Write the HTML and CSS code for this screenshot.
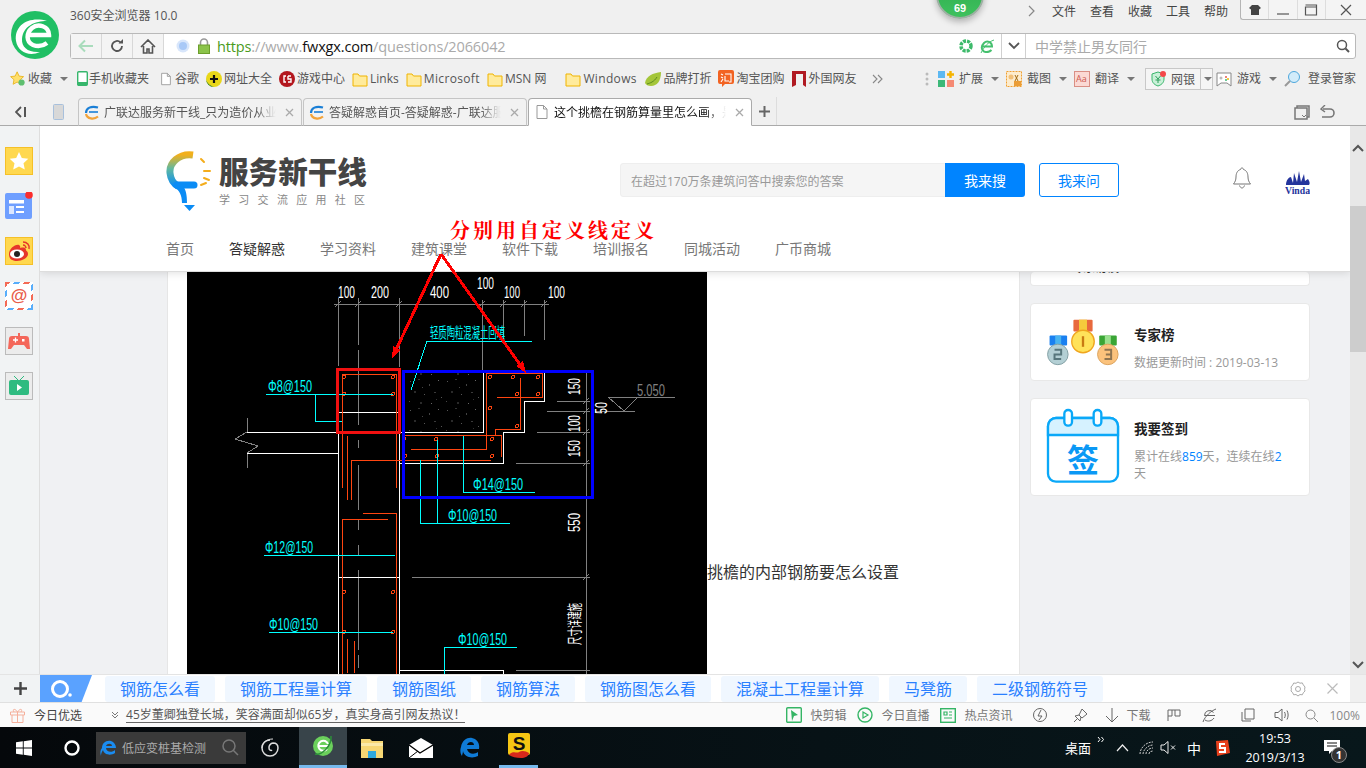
FILE: index.html
```html
<!DOCTYPE html>
<html lang="zh-CN">
<head>
<meta charset="utf-8">
<title>这个挑檐在钢筋算量里怎么画</title>
<link rel="stylesheet" href="styles.css">
</head>
<body>
<svg class="defs" width="0" height="0">
  <symbol id="folder" viewBox="0 0 16 16"><path d="M1 3h5l1.500 2H15v10H1z" fill="#ffeb9c" stroke="#f0b400" stroke-width="1"/></symbol>
  <symbol id="tabe" viewBox="0 0 16 16"><path d="M2 9C2 4 7 1.500 14 3.500" fill="none" stroke="#1a7fd6" stroke-width="2.200"/><path d="M5 8h9" stroke="#1a7fd6" stroke-width="1.600"/><path d="M2 10c1 5 8 6 12 2.500" fill="none" stroke="#f2a33a" stroke-width="2.200"/></symbol>
  <symbol id="doc" viewBox="0 0 16 16"><path d="M3 1.500h6.500l3.500 3.500v9.500H3z M9.500 1.500V5H13" fill="#fff" stroke="#999" stroke-width="1"/></symbol>
</svg>

<header class="chrome">
  <div class="top">
    <div class="brand">
      <svg width="48" height="48" viewBox="0 0 48 48"><circle cx="24" cy="24" r="24" fill="#20bf64"/><path d="M5 30C3 14 18 5 36 10 24 10 12 15 11 28c-.5 8 6 14 18 13-11 5-22 0-24-11z" fill="#fff"/><path d="M17 24H38C38 15 27 12 21 17c-6 5-6 14 1 17 5 2 10 1 14-2" fill="none" stroke="#fff" stroke-width="4.500"/></svg>
    </div>
    <div class="top-main">
      <div class="title-row">
        <span class="app-title">360安全浏览器 10.0</span>
        <nav class="menu">
          <svg class="menu-more" width="8" height="12" viewBox="0 0 8 12"><path d="M1 1l5 5-5 5" fill="none" stroke="#888" stroke-width="1.200"/></svg>
          <span>文件</span><span>查看</span><span>收藏</span><span>工具</span><span>帮助</span>
        </nav>
        <div class="winctl">
          <span class="wbtn"><svg width="14" height="12" viewBox="0 0 14 12"><path d="M4 1h6l3 3-2 1.500V11H3V5.500L1 4z" fill="#444"/></svg></span>
          <span class="wbtn"><svg width="14" height="12" viewBox="0 0 14 12"><path d="M1 10h12" stroke="#555" stroke-width="1.200"/></svg></span>
          <span class="wbtn"><svg width="14" height="12" viewBox="0 0 14 12"><path d="M1.500 3h11v8h-11zM1.500 1h11v2" fill="none" stroke="#555" stroke-width="1.200"/></svg></span>
          <span class="wbtn wide"><svg width="12" height="12" viewBox="0 0 12 12"><path d="M1 1l10 10M11 1L1 11" stroke="#555" stroke-width="1.200"/></svg></span>
        </div>
      </div>
      <div class="address">
        <span class="nav-btn"><svg width="16" height="14" viewBox="0 0 16 14"><path d="M15 7H2M7 1.500L1.500 7 7 12.500" fill="none" stroke="#a9dcbc" stroke-width="2"/></svg></span>
        <span class="nav-btn"><svg width="14" height="14" viewBox="0 0 14 14"><path d="M12 7a5 5 0 1 1-1.500-3.600" fill="none" stroke="#555" stroke-width="1.800"/><path d="M8.500 4.500H13V0z" fill="#555"/></svg></span>
        <span class="nav-btn"><svg width="16" height="15" viewBox="0 0 16 15"><path d="M1 8l7-7 7 7M3.500 7v7h3.500v-4h2v4h3.500V7" fill="none" stroke="#555" stroke-width="1.600"/></svg></span>
        <svg class="globe" width="14" height="14" viewBox="0 0 14 14"><circle cx="7" cy="7" r="6.500" fill="#d8e6fb"/><circle cx="7" cy="7" r="4" fill="#a9c9f7"/></svg>
        <svg class="lock" width="14" height="16" viewBox="0 0 14 16"><path d="M3.500 7V4.500a3.500 3.500 0 0 1 7 0V7" fill="none" stroke="#999" stroke-width="1.600"/><rect x="1.500" y="7" width="11" height="8.500" fill="#8bc34a" stroke="#6c9e2c"/></svg>
        <div class="url"><span class="u-g">https</span>://www.<span class="u-b">fwxgx.com</span>/questions/2066042</div>
        <span class="addr-icons">
          <svg width="14" height="14" viewBox="0 0 14 14"><circle cx="7" cy="7" r="5" fill="none" stroke="#3cba6a" stroke-width="3.500" stroke-dasharray="3 1"/></svg>
          <svg width="14" height="14" viewBox="0 0 14 14"><path d="M2 7.500h10C12 3 7 1 4 4 1 7 1 11 4 12.500c2.500 1 5.500.5 7.500-1.500" fill="none" stroke="#45c06e" stroke-width="2"/><path d="M1 14C4 8 8 3 14 1" fill="none" stroke="#45c06e"/></svg>
        </span>
        <span class="drop"><svg width="12" height="8" viewBox="0 0 12 8"><path d="M1 1l5 5 5-5" fill="none" stroke="#555" stroke-width="1.800"/></svg></span>
        <div class="search-box"><span>中学禁止男女同行</span><svg width="14" height="14" viewBox="0 0 14 14"><circle cx="6" cy="6" r="4.500" fill="none" stroke="#555" stroke-width="1.500"/><path d="M9.500 9.500L13 13" stroke="#555" stroke-width="2"/></svg></div>
      </div>
    </div>
  </div>

  <div class="bookmarks">
    <div class="bm-left">
      <span class="bm"><svg width="16" height="17" viewBox="0 0 18 17"><path d="M8 1l2.200 4.800 5.100.6-3.800 3.500 1 5.100L8 12.500 3.500 15l1-5.100L.7 6.400l5.100-.6z" fill="#ffdf6b" stroke="#e8b520"/><circle cx="13" cy="13" r="3.500" fill="#5fbf70"/></svg>收藏<i class="caret"></i></span>
      <span class="bm bm-phone"><svg width="11" height="15" viewBox="0 0 11 15"><rect x=".7" y=".7" width="9.600" height="13.600" rx="1" fill="#fff" stroke="#37b66c" stroke-width="1.400"/><rect x="1" y="11" width="9" height="3" fill="#37b66c"/></svg>手机收藏夹</span>
      <span class="bm bm-doc"><svg width="14" height="16"><use href="#doc"/></svg>谷歌</span>
      <span class="bm"><svg width="16" height="16" viewBox="0 0 16 16"><circle cx="8" cy="8" r="8" fill="#e9d719"/><path d="M0 8a8 8 0 0 0 8 8c-5-2-7-4-8-8z" fill="#1b7b35"/><path d="M8 4v8M4 8h8" stroke="#111" stroke-width="2.200"/></svg>网址大全</span>
      <span class="bm"><svg width="16" height="16" viewBox="0 0 16 16"><circle cx="8" cy="8" r="8" fill="#b3161d"/><path d="M7 5H5v6h2M9 5h3M9 5v3h3v3H9" fill="none" stroke="#fff" stroke-width="1.400"/></svg>游戏中心</span>
      <span class="bm"><svg width="16" height="16"><use href="#folder"/></svg>Links</span>
      <span class="bm lat"><svg width="16" height="16"><use href="#folder"/></svg>Microsoft</span>
      <span class="bm bm-wide"><svg width="16" height="16"><use href="#folder"/></svg>MSN 网</span>
      <span class="bm lat bm-win"><svg width="16" height="16"><use href="#folder"/></svg>Windows</span>
      <span class="bm"><svg width="16" height="16" viewBox="0 0 16 16"><path d="M0 12C1 5 8 2 16 1c0 9-4 14-10 14-3 0-5-1-6-3z" fill="#a4c639"/><path d="M2 13c3-1 7-2 10-7" stroke="#5d8a1e" fill="none"/></svg>品牌打折</span>
      <span class="bm bm-tb"><svg width="16" height="17" viewBox="0 0 16 17"><path d="M2 0h12a2 2 0 0 1 2 2v10a2 2 0 0 1-2 2H7l-3 3v-3H2a2 2 0 0 1-2-2V2a2 2 0 0 1 2-2z" fill="#f26322"/><path d="M3 4l2 1M3 7l2 1M3 12l2-3M7 4h6v8h-2M7 6v5h4" fill="none" stroke="#fff" stroke-width="1.100"/></svg>淘宝团购</span>
      <span class="bm"><svg width="14" height="16" viewBox="0 0 14 16"><path d="M0 0h14v16l-3-2V3H4v11l-4 2z" fill="#b01a22"/></svg>外国网友</span>
      <svg class="more" width="12" height="10" viewBox="0 0 12 10"><path d="M1 1l4 4-4 4M6 1l4 4-4 4" fill="none" stroke="#888" stroke-width="1.100"/></svg>
    </div>
    <div class="bm-right">
      <svg class="grip" width="4" height="14" viewBox="0 0 4 14"><circle cx="2" cy="2" r="1.500" fill="#bbb"/><circle cx="2" cy="7" r="1.500" fill="#bbb"/><circle cx="2" cy="12" r="1.500" fill="#bbb"/></svg>
      <span class="bm tool"><svg width="16" height="16" viewBox="0 0 16 16"><rect x="0" y="0" width="7" height="7" fill="#5cb8f2"/><rect x="0" y="9" width="7" height="7" fill="#3cb878"/><rect x="9" y="9" width="7" height="7" fill="#f58a74"/><path d="M12.500 0v7M9 3.500h7" stroke="#f5b400" stroke-width="2.400"/></svg>扩展<i class="caret"></i></span>
      <span class="bm tool"><svg width="16" height="16" viewBox="0 0 16 16"><rect x=".5" y=".5" width="15" height="15" fill="#fdeccd" stroke="#f0a030" stroke-dasharray="2 1"/><circle cx="5" cy="6" r="2.500" fill="#f2c078"/><path d="M9 4l3 6M12 4L9 10" stroke="#a36a10"/><rect x="8" y="10" width="7" height="5" fill="#eb9d36"/></svg>截图<i class="caret"></i></span>
      <span class="bm tool"><svg width="16" height="16" viewBox="0 0 16 16"><rect x=".5" y=".5" width="15" height="15" fill="#fbd9d4" stroke="#d98f85"/></svg><em class="aa">Aa</em>翻译<i class="caret"></i></span>
      <span class="bank"><svg width="16" height="16" viewBox="0 0 16 16"><path d="M8 1l6 2v5c0 4-3 6-6 7-3-1-6-3-6-7V3z" fill="#c9f0d8" stroke="#38b56b"/><path d="M5.500 5L8 8l2.500-3M8 8v4M5.500 9h5" stroke="#2e9e5a" fill="none"/><circle cx="13" cy="3" r="3" fill="#f4484a"/></svg><span class="bank-t">网银</span><span class="bank-c"><i class="caret"></i></span></span>
      <span class="bm tool"><svg width="16" height="16" viewBox="0 0 16 16"><path d="M1 2h14v13l-4-3H5l-4 3z" fill="#fff" stroke="#888"/><circle cx="5" cy="7" r="1.500" fill="#bbb"/><circle cx="10" cy="6" r="1" fill="#e8584f"/><circle cx="12" cy="8" r="1" fill="#f5b400"/><circle cx="10" cy="9" r="1" fill="#3cb878"/></svg>游戏<i class="caret"></i></span>
      <span class="bm tool last"><svg width="16" height="16" viewBox="0 0 16 16"><circle cx="10" cy="6" r="5.500" fill="#d2ecfa" stroke="#4da7dc"/><path d="M6 10l-5 5" stroke="#999" stroke-width="2"/></svg>登录管家</span>
    </div>
  </div>

  <div class="tabs">
    <svg class="side-toggle" width="11" height="12" viewBox="0 0 11 12"><path d="M6 1L1 6l5 5" fill="none" stroke="#555" stroke-width="1.800"/><path d="M10 1v10" stroke="#555" stroke-width="2"/></svg>
    <svg class="phone" width="11" height="16" viewBox="0 0 11 16"><rect x=".5" y=".5" width="10" height="15" rx="1" fill="#d8d8d8" stroke="#a8c0dc"/></svg>
    <div class="tab"><svg width="16" height="16"><use href="#tabe"/></svg><span class="tab-t">广联达服务新干线_只为造价从业人员服务</span><svg class="tab-x" width="9" height="9" viewBox="0 0 9 9"><path d="M1 1l7 7M8 1L1 8" stroke="#aaa" stroke-width="1.300"/></svg></div>
    <div class="tab"><svg width="16" height="16"><use href="#tabe"/></svg><span class="tab-t">答疑解惑首页-答疑解惑-广联达服务新干线</span><svg class="tab-x" width="9" height="9" viewBox="0 0 9 9"><path d="M1 1l7 7M8 1L1 8" stroke="#aaa" stroke-width="1.300"/></svg></div>
    <div class="tab active"><svg width="16" height="16"><use href="#doc"/></svg><span class="tab-t">这个挑檐在钢筋算量里怎么画，是否需要</span><svg class="tab-x" width="9" height="9" viewBox="0 0 9 9"><path d="M1 1l7 7M8 1L1 8" stroke="#aaa" stroke-width="1.300"/></svg></div>
    <span class="tab-add"><svg width="11" height="11" viewBox="0 0 11 11"><path d="M5.500 0v11M0 5.500h11" stroke="#666" stroke-width="2"/></svg></span>
    <span class="tab-tools">
      <svg width="16" height="15" viewBox="0 0 16 15"><path d="M3 3V1h12v11h-2M1 3h12v11H1z" fill="none" stroke="#777" stroke-width="1.500"/><path d="M8 10l2 2 2-2" stroke="#777" fill="none"/></svg>
      <svg width="15" height="15" viewBox="0 0 15 15"><path d="M3 4h7a4 4 0 0 1 0 8H2" fill="none" stroke="#777" stroke-width="1.600"/><path d="M5 0L1 4l4 3" fill="none" stroke="#777" stroke-width="1.400"/></svg>
    </span>
  </div>
</header>

<div class="main">
  <aside class="rail">
    <span class="rail-i r-star"><svg width="22" height="22" viewBox="0 0 22 22"><path d="M11 2l2.800 6 6.500.8-4.800 4.400 1.300 6.400L11 16.400 5.200 19.600l1.300-6.400L1.700 8.800l6.500-.8z" fill="#fff"/></svg></span>
    <span class="rail-i r-news"><svg width="28" height="28" viewBox="0 0 28 28"><rect x="0" y="1" width="27" height="26" rx="2" fill="#6f9fff"/><rect x="4" y="8" width="15" height="3.500" fill="#fff"/><rect x="4" y="14" width="5" height="8" fill="#dbe7ff"/><rect x="11" y="14" width="8" height="2" fill="#fff"/><rect x="11" y="19" width="8" height="2" fill="#fff"/><circle cx="24" cy="3" r="3.800" fill="#fb2d2d"/></svg></span>
    <span class="rail-i r-star"><svg width="26" height="24" viewBox="0 0 26 24"><path d="M3 15c0-5 6-10 10-9 2 1 1 3 1 3s6-2 6 2c0 1 2 1 2 4 0 4-6 7-11 7S3 20 3 15z" fill="#e6362b"/><ellipse cx="11" cy="15" rx="7" ry="4.500" fill="#fff"/><circle cx="11" cy="15" r="3" fill="#222"/><path d="M17 3c4 0 7 3 6 7M17 6c2 0 3 2 3 3" fill="none" stroke="#e6362b" stroke-width="1.500"/></svg></span>
    <span class="rail-i r-mail"><b>@</b></span>
    <span class="rail-i r-gray"><svg width="22" height="18" viewBox="0 0 22 18"><path d="M4 4h14a3 3 0 0 1 3 3l1 10h-3l-3-4H6l-3 4H0l1-10a3 3 0 0 1 3-3z" fill="#f4675a"/><path d="M11 4V1" stroke="#f4675a" stroke-width="2"/><path d="M5 8h5M7.500 5.500v5" stroke="#fff" stroke-width="1.300"/><rect x="14" y="7" width="2.500" height="2.500" fill="#fff"/></svg></span>
    <span class="rail-i r-gray"><svg width="22" height="20" viewBox="0 0 22 20"><rect x="1" y="4" width="20" height="15" rx="2" fill="#2fbb80"/><path d="M6 0l4 4M16 0l-4 4" stroke="#2fbb80"/><path d="M9 8l5 3.500L9 15z" fill="#fff"/></svg></span>
  </aside>

  <div class="page">
    <div class="site-header">
      <div class="site-top">
        <div class="logo">
          <svg width="47" height="62" viewBox="0 0 47 62">
            <defs><linearGradient id="bulb" x1="0" y1="0" x2="0" y2="1"><stop offset="0" stop-color="#f2b01c"/><stop offset=".45" stop-color="#5fb8a0"/><stop offset="1" stop-color="#0b8cf5"/></linearGradient></defs>
            <path d="M27 4C13 2 3 12 4 22c.500 6 4 11 8 13" fill="none" stroke="url(#bulb)" stroke-width="7"/>
            <path d="M11 34h17" stroke="#0b8cf5" stroke-width="7" stroke-linecap="round"/>
            <path d="M9 37c4 2 7 7 7 15h5c0-8-1-13-4-17z" fill="#0b8cf5"/>
            <path d="M18 54h11l-5.500 6z" fill="#0b8cf5"/>
            <path d="M35 8l3 3M38 20h6M38 27l5 2M35 34l5-2" stroke="#f4ad1c" stroke-width="2" stroke-linecap="round"/>
          </svg>
          <div class="logo-t"><strong>服务新干线</strong><small>学习交流应用社区</small></div>
        </div>
        <div class="q-box"><span>在超过170万条建筑问答中搜索您的答案</span><button class="q-btn">我来搜</button></div>
        <button class="ask">我来问</button>
        <svg class="bell" width="18" height="22" viewBox="0 0 18 22"><path d="M9 1c1 0 1.500.8 1.500 1.500C14 3.500 15 7 15 10c0 3 1 5 2.500 7H.5C2 15 3 13 3 10c0-3 1-6.500 4.500-7.500C7.500 1.800 8 1 9 1zM6.500 18.500c.5 1.500 1.500 2.500 2.500 2.500s2-1 2.500-2.500" fill="none" stroke="#777"/></svg>
        <svg class="avatar" width="25" height="26" viewBox="0 0 25 26"><path d="M1 16c0-5 3-8 5-8l2 6 1-10 3 9 2-11 2 11 3-8 1 7 3-2c2 3 2 5 1 6H1z" fill="#24349c"/><text x="0" y="25" class="avatar-t" textLength="25" lengthAdjust="spacingAndGlyphs">Vinda</text></svg>
      </div>
      <nav class="site-nav">
        <a>首页</a><a class="cur">答疑解惑</a><a>学习资料</a><a>建筑课堂</a><a>软件下载</a><a>培训报名</a><a>同城活动</a><a>广币商城</a>
      </nav>
    </div>

    <div class="site-body">
      <article class="article">
        <svg class="cad" width="520" height="402" viewBox="187 272 520 402">
          <defs>
            <pattern id="speck" width="37" height="29" patternUnits="userSpaceOnUse">
              <rect x="3" y="4" width="1" height="1" fill="#555"/><rect x="11" y="2" width="2" height="1" fill="#333"/><rect x="22" y="7" width="1" height="2" fill="#444"/><rect x="31" y="3" width="1" height="1" fill="#666"/>
              <rect x="7" y="14" width="2" height="2" fill="#2a2a2a"/><rect x="17" y="17" width="1" height="1" fill="#555"/><rect x="27" y="15" width="2" height="1" fill="#3a3a3a"/><rect x="34" y="20" width="1" height="1" fill="#555"/>
              <rect x="2" y="24" width="1" height="1" fill="#444"/><rect x="13" y="25" width="2" height="2" fill="#2a2a2a"/><rect x="24" y="26" width="1" height="1" fill="#666"/><rect x="15" y="10" width="1" height="1" fill="#444"/><rect x="29" y="22" width="1" height="1" fill="#333"/>
            </pattern>
          </defs>
          <rect x="187" y="272" width="520" height="402" fill="#000"/>
          <rect x="402" y="373" width="81" height="59" fill="url(#speck)"/>
          <g class="gray">
            <path d="M334 304H549M338 298V366M399 298V367M482 300V370M503 300V340M524 300V336M544 300V340"/>
            <path d="M358 298V345M358 350V425M358 440V448M358 465V510M358 520V530M358 545V555M358 570V650M358 655V668"/>
            <path d="M586 372V674M557 401.500H590M547 411H590M537 432H590M516 463H590M412 577H590M516 670H590"/>
            <path d="M247 418V432M247 453V468M247 432L235 439L258 446L247 453"/>
            <path d="M608 397H675M608 397L624 411L638 397M595 411H635"/>
            <path d="M335 307l6-6M355 307l6-6M396 307l6-6M479 307l6-6M500 307l6-6M521 307l6-6M541 307l6-6M583 404l6-6M583 414l6-6M583 435l6-6M583 466l6-6M583 580l6-6"/>
          </g>
          <g class="white">
            <path d="M338 370H399M338 370V674M399 370V674M338 412H399M247 432H338M247 453H338V480M338 577H399"/>
            <path d="M399 432H483V373M544 373V401H524V432H503V463H400M399 670H503V674"/>
          </g>
          <g class="orange">
            <path d="M342 488V374H396V488M347 436V500M351 500V460.500H491M403 435H501V457M495 435V429H520.500V378M486 374V449H411M486 373.500H542V397.500H497"/>
            <path d="M363 513H396V674M388 519H342V674M347 639V673M354 641V673"/>
          </g>
          <g class="dots">
            <circle cx="344" cy="377" r="1.500"/><circle cx="393" cy="377" r="1.500"/><circle cx="344" cy="394" r="1.500"/><circle cx="393" cy="394" r="1.500"/><circle cx="490" cy="377" r="1.500"/><circle cx="513" cy="377" r="1.500"/><circle cx="538" cy="377" r="1.500"/><circle cx="517" cy="394" r="1.500"/><circle cx="538" cy="394" r="1.500"/><circle cx="490" cy="408" r="1.500"/><circle cx="517" cy="426" r="1.500"/><circle cx="436" cy="439" r="1.500"/><circle cx="492" cy="439" r="1.500"/><circle cx="492" cy="456" r="1.500"/><circle cx="437" cy="456" r="1.500"/><circle cx="405" cy="456" r="1.500"/><circle cx="404" cy="439" r="1.500"/><circle cx="344" cy="592" r="1.500"/><circle cx="393" cy="592" r="1.500"/><circle cx="344" cy="632" r="1.500"/><circle cx="393" cy="632" r="1.500"/>
          </g>
          <g class="cyan">
            <path d="M532 341H427L411 390M266 394H393M315 394V421H342M463 436V492H535M420 460V523H510M437 440V523M264 555H395M269 632H393M517 647H444V674"/>
          </g>
          <g class="t-c">
            <text x="430" y="338" textLength="75" lengthAdjust="spacingAndGlyphs">轻质陶粒混凝土回填</text>
            <text x="268" y="392" textLength="44" lengthAdjust="spacingAndGlyphs">Φ8@150</text>
            <text x="473" y="490" textLength="50" lengthAdjust="spacingAndGlyphs">Φ14@150</text>
            <text x="448" y="521" textLength="49" lengthAdjust="spacingAndGlyphs">Φ10@150</text>
            <text x="265" y="553" textLength="48" lengthAdjust="spacingAndGlyphs">Φ12@150</text>
            <text x="269" y="630" textLength="49" lengthAdjust="spacingAndGlyphs">Φ10@150</text>
            <text x="458" y="645" textLength="49" lengthAdjust="spacingAndGlyphs">Φ10@150</text>
          </g>
          <g class="t-w">
            <text x="338" y="298" textLength="17" lengthAdjust="spacingAndGlyphs">100</text>
            <text x="371" y="298" textLength="18" lengthAdjust="spacingAndGlyphs">200</text>
            <text x="430" y="298" textLength="19" lengthAdjust="spacingAndGlyphs">400</text>
            <text x="477" y="289" textLength="17" lengthAdjust="spacingAndGlyphs">100</text>
            <text x="504" y="298" textLength="16" lengthAdjust="spacingAndGlyphs">100</text>
            <text x="548" y="298" textLength="17" lengthAdjust="spacingAndGlyphs">100</text>
            <text transform="translate(580 395) rotate(-90)" textLength="17" lengthAdjust="spacingAndGlyphs">150</text>
            <text transform="translate(580 432) rotate(-90)" textLength="17" lengthAdjust="spacingAndGlyphs">100</text>
            <text transform="translate(580 457) rotate(-90)" textLength="17" lengthAdjust="spacingAndGlyphs">150</text>
            <text transform="translate(580 532) rotate(-90)" textLength="19" lengthAdjust="spacingAndGlyphs">550</text>
            <text transform="translate(607 414) rotate(-90)" textLength="12" lengthAdjust="spacingAndGlyphs">50</text>
            <text class="t-cn" transform="translate(580 645) rotate(-90)" textLength="42" lengthAdjust="spacingAndGlyphs">尺寸详建施</text>
          </g>
          <text class="t-g" x="637" y="396" textLength="28" lengthAdjust="spacingAndGlyphs">5.050</text>
          <rect class="box-blue" x="403.500" y="371.500" width="189" height="125.500"/>
          <rect class="box-red" x="337.500" y="369.500" width="62" height="63"/>
        </svg>
        <p class="q-text">挑檐的内部钢筋要怎么设置</p>
      </article>
      <aside class="side">
        <div class="card card-cut"><span>专家访谈</span></div>
        <div class="card card-a">
          <svg width="74" height="48" viewBox="75 145 222 145">
            <rect x="157" y="147" width="58" height="36" rx="3" fill="#e8693d"/><rect x="174" y="147" width="24" height="36" fill="#f5cb3c"/>
            <rect x="85" y="195" width="53" height="30" rx="3" fill="#1a80f0"/><rect x="102" y="195" width="18" height="30" fill="#49b4f0"/>
            <rect x="235" y="195" width="53" height="30" rx="3" fill="#3aa535"/><rect x="252" y="195" width="18" height="30" fill="#9ae08e"/>
            <circle cx="110" cy="252" r="31" fill="#b3cfd4" stroke="#83a0a4" stroke-width="3"/><path d="M100 238h20v14h-20v14h20" fill="none" stroke="#57767c" stroke-width="6"/>
            <circle cx="261" cy="252" r="31" fill="#fbc27c" stroke="#dca35e" stroke-width="3"/><path d="M251 238h20v14h-16M271 252v14h-20" fill="none" stroke="#8e7450" stroke-width="6"/>
            <circle cx="186" cy="213" r="34" fill="#ffe25a" stroke="#f0a51e" stroke-width="4"/><path d="M186 197v32" stroke="#c87a12" stroke-width="7"/>
          </svg>
          <div class="card-t"><h3>专家榜</h3><p>数据更新时间 : 2019-03-13</p></div>
        </div>
        <div class="card card-b">
          <svg width="74" height="76" viewBox="75 411 222 228">
            <rect x="81" y="441" width="210" height="191" rx="24" fill="#fff" stroke="#0aa8f8" stroke-width="7"/>
            <path d="M81 492v-27a24 24 0 0 1 24-24h162a24 24 0 0 1 24 24v27z" fill="#d6f2ff" stroke="#0aa8f8" stroke-width="7"/>
            <rect x="130" y="417" width="23" height="47" rx="11" fill="#fff" stroke="#0aa8f8" stroke-width="7"/>
            <rect x="218" y="417" width="23" height="47" rx="11" fill="#fff" stroke="#0aa8f8" stroke-width="7"/>
            <text x="186" y="603" class="sign-t">签</text>
          </svg>
          <div class="card-t"><h3>我要签到</h3><p>累计在线<b>859</b>天，连续在线<b>2</b>天</p></div>
        </div>
      </aside>
    </div>
  </div>

  <div class="scrollbar">
    <svg class="sb-up" width="12" height="8" viewBox="0 0 12 8"><path d="M1 7l5-5 5 5" fill="none" stroke="#555" stroke-width="2"/></svg>
    <div class="sb-thumb"></div>
    <svg class="sb-down" width="12" height="8" viewBox="0 0 12 8"><path d="M1 1l5 5 5-5" fill="none" stroke="#555" stroke-width="2"/></svg>
  </div>
</div>

<div class="hot">
  <span class="hot-add"><svg width="13" height="13" viewBox="0 0 13 13"><path d="M6.500 0v13M0 6.500h13" stroke="#444" stroke-width="2.400"/></svg></span>
  <span class="hot-logo"><svg width="24" height="20" viewBox="0 0 24 20"><circle cx="10" cy="10" r="7.500" fill="none" stroke="#fff" stroke-width="3"/><circle cx="20" cy="16" r="1.800" fill="#fff"/></svg></span>
  <span class="chip">钢筋怎么看</span><span class="chip">钢筋工程量计算</span><span class="chip">钢筋图纸</span><span class="chip">钢筋算法</span><span class="chip">钢筋图怎么看</span><span class="chip">混凝土工程量计算</span><span class="chip">马凳筋</span><span class="chip">二级钢筋符号</span>
  <svg class="hot-gear" width="16" height="16" viewBox="0 0 16 16"><path d="M8 1l2 1.200 2.300-.3 1 2L15 6l-.4 2.200L15 10l-1.700 1.800-1 2-2.300-.3L8 15l-2-1.500-2.300.3-1-2L1 10l.4-1.800L1 6l1.700-2 1-2 2.300.3z" fill="none" stroke="#aaa"/><circle cx="8" cy="8" r="2.500" fill="none" stroke="#aaa"/></svg>
  <svg class="hot-close" width="11" height="11" viewBox="0 0 11 11"><path d="M.5.5l10 10M10.500.5l-10 10" stroke="#bbb" stroke-width="1.200"/></svg>
  <span class="hot-end"></span>
</div>

<div class="status">
  <svg class="s-gift" width="15" height="15" viewBox="0 0 15 15"><path d="M.5 4h14v3H.5zM2 7v7.500h11V7M7.500 4v10.500M7.500 4C5 0 2 1 4 4M7.500 4c2.500-4 5.500-3 3.500 0" fill="none" stroke="#f5b09c"/></svg>
  <span class="s-today">今日优选</span>
  <svg class="s-chev" width="8" height="8" viewBox="0 0 8 8"><path d="M1 1l3 3 3-3M1 4l3 3 3-3" fill="none" stroke="#777"/></svg>
  <span class="s-news">45岁董卿独登长城，笑容满面却似65岁，真实身高引网友热议！</span>
  <div class="s-right">
    <span class="s-it"><svg width="16" height="16" viewBox="0 0 16 16"><rect x=".7" y=".7" width="14.600" height="14.600" rx="1" fill="none" stroke="#35b565" stroke-width="1.400"/><path d="M5 3l7 5-4 1-2 5z" fill="#35b565"/></svg>快剪辑</span>
    <span class="s-it"><svg width="16" height="16" viewBox="0 0 16 16"><circle cx="8" cy="8" r="7" fill="none" stroke="#35b565" stroke-width="1.400"/><path d="M6 5l5 3-5 3z" fill="none" stroke="#35b565" stroke-width="1.200"/></svg>今日直播</span>
    <span class="s-it"><svg width="16" height="16" viewBox="0 0 16 16"><rect x=".7" y="1.700" width="14.600" height="13.600" fill="none" stroke="#35b565" stroke-width="1.400"/><path d="M4 5h3v3H4zM9 5h3M9 8h3M4 11h8" fill="none" stroke="#35b565" stroke-width="1.200"/></svg>热点资讯</span>
    <svg class="ic1" width="16" height="16" viewBox="0 0 16 16"><circle cx="8" cy="8" r="6.500" fill="none" stroke="#666"/><path d="M9 3L6 9h4l-3 4" fill="none" stroke="#666"/></svg>
    <svg class="ic2" width="15" height="15" viewBox="0 0 15 15"><path d="M9 1l5 5-5 4-3-3zM6 7l-4 1 5 5 1-4M5 10l-4 4" fill="none" stroke="#666"/></svg>
    <span class="s-it s-dl"><svg width="14" height="15" viewBox="0 0 14 15"><path d="M7 0v14M1 8l6 6 6-6" fill="none" stroke="#666"/></svg>下载</span>
    <svg class="ic3" width="14" height="12" viewBox="0 0 14 12"><path d="M1 12V1h12v6H8V1M5 1v6H1" fill="none" stroke="#666"/></svg>
    <svg class="ic4" width="15" height="15" viewBox="0 0 15 15"><path d="M13 7.500H2.500a5 5 0 0 1 9-3M3 12c3 2 7 1 9-2M14 1C9 3 3 8 1 14" fill="none" stroke="#666"/></svg>
    <svg class="ic5" width="14" height="14" viewBox="0 0 14 14"><path d="M4 1h9v10H4zM1 4v9h9" fill="none" stroke="#666"/></svg>
    <svg class="ic6" width="15" height="14" viewBox="0 0 15 14"><path d="M1 4.500h3L8 1v12L4 9.500H1zM10.500 4c1 2 1 4 0 6M13 2.500c1.500 3 1.500 6 0 9" fill="none" stroke="#666"/></svg>
    <svg class="ic7" width="13" height="13" viewBox="0 0 13 13"><circle cx="5.500" cy="5.500" r="4.500" fill="none" stroke="#888"/><path d="M9 9l4 4" stroke="#888"/></svg>
    <span class="s-pct">100%</span>
  </div>
</div>

<footer class="taskbar">
  <svg class="t-win" width="16" height="16" viewBox="0 0 16 16"><path d="M0 2.300l6.800-1V7.500H0zM7.700 1.200L16 0v7.500H7.700zM0 8.500h6.800v6.200l-6.800-1zM7.700 8.500H16V16l-8.300-1.200z" fill="#fff"/></svg>
  <svg class="t-cort" width="16" height="16" viewBox="0 0 16 16"><circle cx="8" cy="8" r="6.500" fill="none" stroke="#fff" stroke-width="2.400"/></svg>
  <div class="t-search">
    <svg width="18" height="18" viewBox="0 0 18 18"><path d="M2 9c0-5 4-8 9-7 3 1 5 4 5 7H6c0 4 6 5 9 2v3c-4 3-11 2-12-3-2 3-2 5-2 6-1-3-1-6 1-8zm4-2h6c0-3-5-3-6 0z" fill="#1a8cf0"/></svg>
    <span>低应变桩基检测</span>
    <svg class="t-mag" width="17" height="17" viewBox="0 0 17 17"><circle cx="7" cy="7" r="6" fill="none" stroke="#777" stroke-width="1.500"/><path d="M11 11l5 5" stroke="#777" stroke-width="1.500"/></svg>
  </div>
  <span class="t-app t-pin"><svg width="20" height="20" viewBox="0 0 20 20"><path d="M10 2a8 8 0 1 0 8 8c0-3-2-5-5-5a4.500 4.500 0 0 0-4 5c0 2 2 3 3 2" fill="none" stroke="#ddd" stroke-width="1.500"/><path d="M13 1c-6 0-11 3-11 9" fill="none" stroke="#ddd"/></svg></span>
  <span class="t-app cur"><svg width="22" height="24" viewBox="0 0 22 24"><circle cx="11" cy="12" r="10" fill="#6bd05c"/><path d="M6 12h10M16 10a5 5 0 1 0-1 5" fill="none" stroke="#fff" stroke-width="2"/><path d="M3 20C9 22 20 12 19 2" fill="none" stroke="#2d8f3a" stroke-width="1.500"/></svg></span>
  <span class="t-app"><svg width="22" height="20" viewBox="0 0 22 20"><path d="M0 1h9l2 2h11v17H0z" fill="#f7d774"/><path d="M0 5h22v3H0z" fill="#fbe9a8"/><rect x="7" y="13" width="8" height="7" fill="#30a9de"/></svg></span>
  <span class="t-app"><svg width="24" height="20" viewBox="0 0 24 20"><path d="M0 7l12-7 12 7v13H0z" fill="#fff"/><path d="M0 7l11 8 13-8" fill="none" stroke="#000" stroke-width="1.400"/><path d="M0 20l9-7" stroke="#000"/></svg></span>
  <span class="t-app"><svg width="20" height="21" viewBox="0 0 20 21"><path d="M1 10C2 3 8 0 12 1c5 1 8 5 7 11H7c1 5 7 6 11 3v4c-6 3-14 1-15-5 0 2-1 4-1 5-2-3-2-6-1-9zm6-2h7c0-4-6-4-7 0z" fill="#0f7bd6"/></svg></span>
  <span class="t-app mark"><svg width="24" height="26" viewBox="0 0 24 26"><rect x="1" y="0" width="22" height="22" rx="2" fill="#f6c613"/><text x="12" y="17" class="s-logo">S</text><path d="M2 22c4-5 8-1 10-3 3-2 7-1 10 1 0 3-4 5-8 5-5 0-9-1-12-3z" fill="#d8281c"/></svg></span>
  <div class="t-right">
    <span class="t-desk">桌面</span>
    <svg class="t-dbl" width="8" height="7" viewBox="0 0 8 7"><path d="M1 1l2 2.500L1 6M4.500 1l2 2.500L4.500 6" fill="none" stroke="#fff"/></svg>
    <svg class="t-up" width="13" height="8" viewBox="0 0 13 8"><path d="M1 7l5.500-6L12 7" fill="none" stroke="#eee" stroke-width="1.200"/></svg>
    <svg class="t-wifi" width="15" height="14" viewBox="0 0 15 14"><path d="M1 13C1 7 7 1 14 1M4 13c0-4 5-9 10-9M7 13c0-3 3-6 7-6M10 13c0-2 2-3 4-3" fill="none" stroke="#ccc" stroke-dasharray="2 1"/></svg>
    <svg class="t-vol" width="16" height="13" viewBox="0 0 16 13"><path d="M1 4h3l4-3.500v12L4 9H1z" fill="none" stroke="#eee"/><path d="M11 4.500l4 4M15 4.500l-4 4" stroke="#eee"/></svg>
    <span class="t-ime">中</span>
    <svg class="t-sogou" width="16" height="16" viewBox="0 0 16 16"><path d="M2 1l12-1 2 13-13 3z" fill="#e8401c"/><path d="M11 4H6v4h5v4H5" fill="none" stroke="#fff" stroke-width="2"/></svg>
    <div class="t-clock"><span>19:53</span><span>2019/3/13</span></div>
    <span class="t-notify"><svg width="16" height="15" viewBox="0 0 16 15"><path d="M0 0h16v11H8l-3 3v-3H0z" fill="#fff"/><path d="M3 3h10M3 6h10" stroke="#111"/></svg><i>1</i></span>
  </div>
</footer>

<span class="medal">69</span>
<div class="annot">分别用自定义线定义</div>
<svg class="arrows" width="160" height="130" viewBox="380 250 160 130">
  <path d="M441 254L396 350M441 254L521 366" fill="none" stroke="#f00" stroke-width="3"/>
  <path d="M392 358l1-12 8 4zM526 373l-10-7 7-5z" fill="#f00"/>
</svg>
</body>
</html>
```

FILE: styles.css
```css
* { box-sizing: border-box; }
html, body { margin: 0; padding: 0; }
body {
  width: 1366px; height: 768px; overflow: hidden; position: relative;
  font-family: "Open Sans", "Noto Sans CJK SC", sans-serif;
  font-size: 12px; color: #444; background: #f0f0f0;
  display: grid; grid-template-rows: 126px 548px 28px 25px 41px;
}
svg { display: block; flex: none; }
.defs { position: absolute; }

/* browser chrome */
.chrome { background: #f0f0f0; display: flex; flex-direction: column; }
.top { display: flex; height: 64px; }
.brand { width: 70px; padding: 11px 0 0 11px; }
.top-main { flex: 1; padding-right: 10px; }
.title-row { display: flex; height: 33px; margin-right: -10px; }
.app-title { padding-top: 7px; line-height: 18px; color: #555; }
.menu { margin-left: auto; display: flex; gap: 14px; height: 22px; align-items: center; color: #444; padding-right: 12px; }
.menu-more { margin-right: 2px; }
.winctl { display: flex; width: 126px; height: 20px; background: #f4f4f4; border-left: 1px solid #b5b5b5; border-bottom: 1px solid #b5b5b5; border-bottom-left-radius: 3px; }
.wbtn { width: 28.500px; display: flex; align-items: center; justify-content: center; border-right: 1px solid #ddd; }
.wbtn.wide { width: 40px; border: 0; }

.address { display: flex; align-items: center; height: 26px; background: #fff; border: 1px solid #b9b9b9; border-radius: 3px; }
.nav-btn { width: 31px; height: 24px; background: #f4f4f4; border-right: 1px solid #d8d8d8; display: flex; align-items: center; justify-content: center; }
.globe { margin-left: 12px; }
.lock { margin-left: 7px; }
.url { margin-left: 6px; font-size: 14.500px; color: #aaa; white-space: nowrap; font-family: "Open Sans", sans-serif; letter-spacing: -.14px; }
.u-g { color: #4a9b1c; }
.u-b { color: #111; }
.addr-icons { margin-left: auto; display: flex; gap: 7px; margin-right: 7px; }
.drop { width: 25px; height: 24px; border-left: 1px solid #d0d0d0; border-right: 1px solid #d0d0d0; display: flex; align-items: center; justify-content: center; }
.search-box { width: 329px; display: flex; align-items: center; justify-content: space-between; padding: 0 5px 0 9px; font-size: 14px; color: #aaa; }

.bookmarks { height: 33px; padding: 0 10px 4px 10px; display: flex; align-items: center; justify-content: space-between; }
.bm-left, .bm-right { display: flex; align-items: center; }
.bm-left { gap: 7px; }
.bm { display: flex; align-items: center; gap: 2px; white-space: nowrap; line-height: 16px; color: #555; }
.lat { letter-spacing: .35px; }
.bm-phone { margin-left: 2px; gap: 1px; }
.bm-doc { margin-left: 3px; }
.bm-wide { margin-right: 12px; }
.bm-win { margin-right: 1.500px; }
.bm-tb { margin-right: 1px; }
.caret { display: inline-block; width: 0; height: 0; border-left: 4px solid transparent; border-right: 4px solid transparent; border-top: 4px solid #777; margin-left: 6px; }
.more { margin-left: 9px; }
.grip { margin-right: 9px; }
.tool { gap: 5px; margin-right: 7px; }
.tool .caret { margin-left: 3px; }
.tool.last { gap: 8px; margin-right: 0; }
.aa { position: absolute; margin-left: 2px; font-style: normal; font-size: 9px; color: #cc5a50; }
.bank { display: flex; align-items: center; gap: 5px; width: 68px; height: 22px; padding-left: 4px; border: 1px solid #c8c8c8; background: #f5f5f5; margin-right: 3px; margin-left: 3px; color: #555; }
.bank-c { flex: 1; height: 100%; display: flex; align-items: center; border-left: 1px solid #c8c8c8; }
.bank-c .caret { margin-left: 3px; }

.tabs { flex: 1; display: flex; align-items: flex-end; border-bottom: 1px solid #aaa; padding-left: 15px; }
.side-toggle { margin-bottom: 7px; }
.phone { margin: 0 14px 5px 27px; }
.tab { width: 224px; height: 28px; margin-bottom: -1px; display: flex; align-items: center; padding: 0 6px 0 5px; gap: 4px; border: 1px solid #c5c5c5; border-bottom-color: #aaa; border-radius: 4px 4px 0 0; background: #f2f2f2; margin-right: 1px; }
.tab.active { background: #fff; border-color: #aaa; border-bottom-color: #fff; color: #111; }
.tab-t { flex: 1; overflow: hidden; white-space: nowrap; -webkit-mask-image: linear-gradient(90deg, #000 88%, transparent); mask-image: linear-gradient(90deg, #000 88%, transparent); color: #555; }
.tab.active .tab-t { color: #111; }
.tab-x { margin: 0 1px 0 5px; }
.tab-add { width: 24px; height: 28px; border-right: 1px solid #ddd; display: flex; align-items: center; justify-content: center; }
.tab-tools { margin-left: auto; display: flex; gap: 10px; padding-right: 31px; margin-bottom: 5px; }

/* main */
.main { display: grid; grid-template-columns: 40px 1310px 16px; min-height: 0; }
.rail { background: #f1f3f4; border-right: 1px solid #dedede; padding: 21px 0 0 5px; display: flex; flex-direction: column; gap: 17px; position: relative; z-index: 3; }
.rail-i { width: 28px; height: 28px; display: flex; align-items: center; justify-content: center; }
.r-star { background: #ffd84f; border: 1px solid #f5c028; }
.r-mail { background: repeating-linear-gradient(135deg, #f46a55 0 4px, #fff 4px 7px, #58aefb 7px 11px, #fff 11px 14px); }
.r-mail b { width: 24px; height: 24px; background: #fff; color: #e85c4a; font-size: 17px; line-height: 23px; text-align: center; font-weight: 700; font-family: "Liberation Sans", sans-serif; }
.r-gray { background: #ececec; border: 1px solid #bbb; }

.page { display: flex; flex-direction: column; overflow: hidden; min-height: 0; }
.site-header { flex: none; height: 146px; background: #fff; padding: 24px 0 0 126px; border-bottom: 1px solid #ddd; box-shadow: 0 1px 8px rgba(0,0,0,.12); position: relative; z-index: 2; }
.site-top { display: flex; height: 62px; align-items: flex-start; }
.logo { display: flex; width: 201px; gap: 6px; margin-top: 1px; }
.logo-t { display: flex; flex-direction: column; padding-top: 5px; font-family: "Noto Sans CJK SC", sans-serif; }
.logo-t strong { font-size: 29.600px; line-height: 30px; color: #444; font-weight: 900; white-space: nowrap; }
.logo-t small { font-size: 11px; line-height: 14px; margin-top: 6px; letter-spacing: 8.300px; color: #888; white-space: nowrap; }
.q-box { margin: 13px 0 0 253px; width: 405px; height: 34px; display: flex; align-items: center; justify-content: space-between; background: #f5f5f5; border: 1px solid #eee; border-radius: 3px; padding-left: 10px; font-size: 12px; color: #999; }
.q-box span { padding-top: 1px; }
.q-btn { width: 80px; height: 34px; margin-right: -1px; border: 0; background: #0084ff; color: #fff; font: inherit; font-size: 14px; border-radius: 0 3px 3px 0; }
.ask { margin: 13px 0 0 14px; width: 80px; height: 34px; background: #fff; border: 1px solid #0084ff; border-radius: 3px; color: #0084ff; font: inherit; font-size: 14px; }
.bell { margin: 17px 0 0 114px; }
.avatar { margin: 19px 0 0 34px; }
.avatar-t { font-family: "Liberation Serif", serif; font-size: 9.500px; font-weight: 700; fill: #24349c; }
.site-nav { display: flex; gap: 35px; margin-top: 27px; font-size: 14px; line-height: 20px; color: #777; }
.site-nav .cur { color: #333; }

.site-body { flex: 1; min-height: 0; background: #f0f1f3; padding-left: 127px; display: flex; align-items: flex-start; }
.article { width: 853px; height: 100%; background: #fff; border-left: 1px solid #e6e6e6; border-right: 1px solid #e6e6e6; padding-left: 19px; display: flex; }
.q-text { margin: 289px 0 0; font-size: 16px; line-height: 22px; color: #333; white-space: nowrap; }
.cad { fill: none; shape-rendering: crispEdges; }
.gray path { stroke: #808080; stroke-width: 1; fill: none; }
.white path { stroke: #fff; stroke-width: 1; fill: none; }
.orange path { stroke: #ff4510; stroke-width: 1; fill: none; }
.dots circle { stroke: #ff4510; stroke-width: 1; fill: none; }
.cyan path { stroke: #00ffff; stroke-width: 1; fill: none; }
.t-c text, .t-w text, .t-g { font-family: "Liberation Sans", "Noto Sans CJK SC", sans-serif; font-size: 17px; }
.t-c text { fill: #00ffff; }
.t-w text { fill: #fff; }
.t-w .t-cn { font-size: 15px; }
.t-g { fill: #808080; }
.t-c text:first-child { font-size: 15px; }
.box-blue { fill: none; stroke: #0000ff; stroke-width: 3; }
.box-red { fill: none; stroke: #f01010; stroke-width: 3.500; }

.side { margin-left: 10px; width: 280px; display: flex; flex-direction: column; gap: 17px; }
.card { background: #fff; border: 1px solid #e8e8e8; border-radius: 4px; display: flex; }
.card-cut { height: 14px; overflow: hidden; border-top: 0; padding-left: 40px; }
.card-cut span { margin-top: -11px; font-size: 12px; line-height: 14px; color: #333; font-weight: 700; }
.card-a { height: 78px; padding: 15px 0 0 15px; gap: 14px; }
.card-b { height: 98px; padding: 9px 0 0 15px; gap: 14px; }
.card-t { flex: 1; padding-right: 20px; }
.card-t h3 { margin: 0; font-size: 13.500px; line-height: 20px; color: #222; font-weight: 700; }
.card-a .card-t { padding-top: 6px; }
.card-b .card-t { padding-top: 11px; }
.card-t p { margin: 9px 0 0; font-size: 12px; line-height: 17px; color: #999; }
.card-t b { font-weight: 400; color: #0084ff; }
.sign-t { font-family: "Noto Sans CJK SC", sans-serif; font-size: 96px; font-weight: 700; fill: #0a98f5; text-anchor: middle; }

.scrollbar { background: #e8e8e8; display: flex; flex-direction: column; align-items: center; position: relative; }
.sb-up { margin-top: 18px; }
.sb-thumb { width: 16px; height: 146px; margin-top: 54px; background: #cdcdcd; }
.sb-down { margin-top: auto; margin-bottom: 5px; }

/* bottom bars */
.hot { display: flex; align-items: center; background: #fff; border-top: 1px solid #e4e4e4; font-size: 16px; font-family: "Noto Sans CJK SC", sans-serif; }
.hot-add { width: 40px; height: 100%; background: #f1f3f4; display: flex; align-items: center; justify-content: center; }
.hot-logo { width: 52px; height: 100%; background: #5aa2ff; clip-path: polygon(0 0, 100% 0, 80% 100%, 0 100%); padding: 4px 0 0 10px; margin-right: 13px; }
.chip { height: 26px; padding: 0 15px; margin-right: 10px; line-height: 24px; background: #f0f7ff; color: #2a80ff; border-radius: 3px; white-space: nowrap; }
.hot-gear { margin-left: 177px; }
.hot-close { margin-left: 21px; }
.hot-end { width: 16px; height: 100%; background: #f0f0f0; margin-left: auto; }

.status { display: flex; align-items: center; background: #fafafa; border-top: 1px solid #e0e0e0; color: #555; }
.s-gift { margin-left: 10px; }
.s-today { margin-left: 9px; color: #444; }
.s-chev { margin-left: 29px; }
.s-news { margin-left: 7px; color: #555; border-bottom: 1px solid #666; line-height: 15px; white-space: nowrap; }
.s-right { margin-left: auto; display: flex; align-items: center; color: #777; padding-right: 6px; }
.s-it { display: flex; align-items: center; gap: 8px; margin-right: 11px; white-space: nowrap; }
.ic1 { margin-left: 9px; }
.ic2 { margin-left: 25px; }
.s-dl { margin: 0 0 0 17px; gap: 7px; }
.ic3 { margin-left: 17px; }
.ic4 { margin-left: 21px; }
.ic5 { margin-left: 24px; }
.ic6 { margin-left: 19px; }
.ic7 { margin-left: 16px; }
.s-pct { margin-left: 11px; color: #888; }

.taskbar { display: flex; align-items: center; background: linear-gradient(90deg, #05080b, #071216 60%, #08171b); color: #fff; }
.t-win { margin-left: 16px; }
.t-cort { margin-left: 32px; }
.t-search { margin-left: 16px; width: 150px; height: 32px; background: #3a3a3a; display: flex; align-items: center; padding: 0 6px 0 4px; gap: 4px; color: #aaa; white-space: nowrap; }
.t-mag { margin-left: auto; margin-right: 1px; }
.t-app { width: 49px; height: 100%; display: flex; align-items: center; justify-content: center; flex: none; }
.t-pin { width: 53px; padding-right: 6px; }
.t-app.cur { width: 48px; background: #38444a; border-bottom: 3px solid #76b9ed; }
.t-app.mark { border-bottom: 3px solid #76b9ed; width: 39px; margin-left: 5px; }
.s-logo { font-family: "Liberation Sans", sans-serif; font-size: 19px; font-weight: 700; fill: #111; text-anchor: middle; }
.t-right { margin-left: auto; display: flex; align-items: center; height: 100%; padding-right: 26px; position: relative; }
.t-desk { font-size: 13px; }
.t-dbl { margin: 0 0 17px 6px; }
.t-up { margin-left: 11px; }
.t-wifi { margin-left: 10px; }
.t-vol { margin-left: 6px; }
.t-ime { margin-left: 11px; font-size: 14px; }
.t-sogou { margin-left: 13px; }
.t-clock { margin-left: 15px; width: 60px; display: flex; flex-direction: column; align-items: center; line-height: 19px; font-size: 12.500px; white-space: nowrap; }
.t-notify { margin-left: 19px; position: relative; }
.t-notify i { position: absolute; left: 7px; top: 7px; width: 16px; height: 16px; border-radius: 50%; background: #333; border: 1px solid #888; font-style: normal; font-size: 11px; line-height: 14px; text-align: center; font-weight: 700; }

/* overlays */
.medal { position: absolute; left: 936px; top: -29px; width: 48px; height: 48px; border-radius: 50%; background: linear-gradient(#2aa84a, #3fc15e); border: 2px solid #9fb0a4; box-shadow: 0 3px 6px rgba(0,0,0,.25); color: #fff; font-size: 11px; font-weight: 700; text-align: center; line-height: 14px; padding-top: 28px; font-family: "Liberation Sans", sans-serif; }
.annot { position: absolute; left: 450px; top: 216px; font-family: "Noto Serif CJK SC", "Noto Sans CJK SC", serif; font-size: 20px; line-height: 28px; letter-spacing: 3px; color: #f00; font-weight: 700; white-space: nowrap; z-index: 5; }
.arrows { position: absolute; left: 380px; top: 250px; z-index: 5; shape-rendering: crispEdges; }
```
